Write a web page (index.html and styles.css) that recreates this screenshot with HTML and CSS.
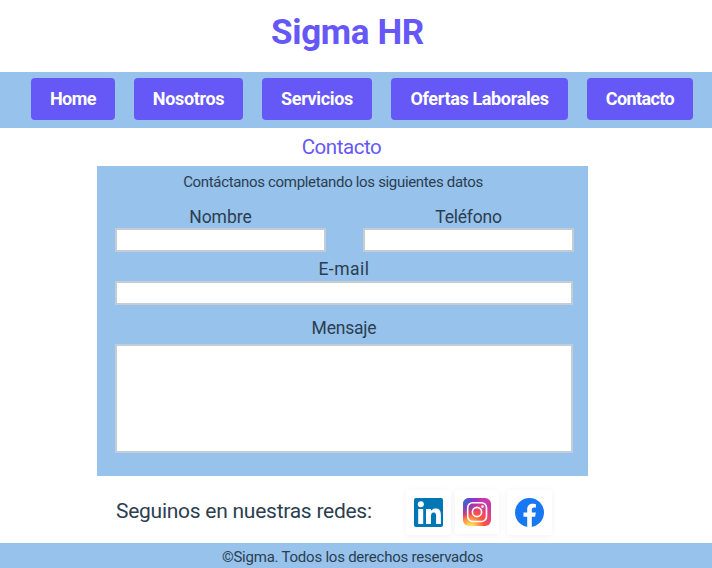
FILE: index.html
```html
<!DOCTYPE html>
<html lang="es">
<head>
<meta charset="utf-8">
<title>Sigma HR</title>
<link rel="stylesheet" href="styles.css">
</head>
<body>
<header class="header"><h1 class="brand">Sigma HR</h1></header>
<nav class="nav">
  <a class="nav-link home">Home</a>
  <a class="nav-link nosotros">Nosotros</a>
  <a class="nav-link servicios">Servicios</a>
  <a class="nav-link ofertas">Ofertas Laborales</a>
  <a class="nav-link contacto">Contacto</a>
</nav>
<main class="main">
  <h2 class="title">Contacto</h2>
  <form class="form">
    <p class="intro">Contáctanos completando los siguientes datos</p>
    <div class="row">
      <div class="field"><label class="label nombre" for="nombre">Nombre</label><input class="input" id="nombre" type="text"></div>
      <div class="field"><label class="label telefono" for="telefono">Teléfono</label><input class="input" id="telefono" type="tel"></div>
    </div>
    <div class="field wide"><label class="label email" for="email">E-mail</label><input class="input" id="email" type="email"></div>
    <div class="field wide message"><label class="label mensaje" for="mensaje">Mensaje</label><textarea class="input area" id="mensaje"></textarea></div>
  </form>
</main>
<section class="social">
  <p class="social-text">Seguinos en nuestras redes:</p>
  <a class="card linkedin">
    <svg width="29" height="29" viewBox="0 0 29 29"><rect width="29" height="29" rx="2" fill="#0077b5"/><circle cx="6.8" cy="6.2" r="3" fill="#fff"/><path fill="#fff" d="M4.2 11h5v15h-5zM12 11h4.9v2.1c.9-1.5 2.5-2.5 4.7-2.5 4.3 0 5.3 2.9 5.3 6.8V26h-4.8v-7.6c0-2-.3-3.8-2.5-3.8s-2.6 1.8-2.6 3.7V26h-5z"/></svg>
  </a>
  <a class="card instagram">
    <svg width="28" height="28" viewBox="0 0 28 28">
      <defs>
        <radialGradient id="warm" cx=".27" cy="1.07" r="1"><stop offset="0" stop-color="#fd5"/><stop offset=".12" stop-color="#fd5"/><stop offset=".5" stop-color="#ff543e"/><stop offset="1" stop-color="#c837ab"/></radialGradient>
        <radialGradient id="cool" cx="-.1" cy="0" r=".75"><stop offset="0" stop-color="#3771c8"/><stop offset=".3" stop-color="#3f66cf"/><stop offset="1" stop-color="#60f" stop-opacity="0"/></radialGradient>
      </defs>
      <rect width="28" height="28" rx="6" fill="url(#warm)"/><rect width="28" height="28" rx="6" fill="url(#cool)"/>
      <rect x="4.7" y="4.7" width="18.8" height="18.8" rx="5" fill="none" stroke="#fff" stroke-width="1.6"/><circle cx="14" cy="14" r="4.6" fill="none" stroke="#fff" stroke-width="1.6"/><circle cx="19.5" cy="8.6" r="1.3" fill="#fff"/>
    </svg>
  </a>
  <a class="card facebook">
    <svg width="29" height="29" viewBox="0 0 29 29"><circle cx="14.5" cy="14.5" r="14.5" fill="#1877f2"/><path fill="#fff" d="M12.2 29V18.7H8.5v-4.2h3.7v-3.2c0-3.6 2.2-5.6 5.5-5.6 1.6 0 3.2.3 3.2.3v3.5h-1.8c-1.8 0-2.3 1.1-2.3 2.3v2.7h4l-.7 4.2h-3.3V29z"/></svg>
  </a>
</section>
<footer class="footer">©Sigma. Todos los derechos reservados</footer>
</body>
</html>
```
FILE: styles.css
```css
* { box-sizing: border-box; }
body { margin: 0; background: #fff; color: #2c3e50; font-family: Roboto, "Liberation Sans", sans-serif; }
h1, h2, p { margin: 0; }
.header { height: 72px; padding: 12px 17px 0 0; text-align: center; }
.brand { font-size: 35px; line-height: 42px; font-weight: 700; letter-spacing: -.35px; color: #6658f6; }
.nav { display: flex; gap: 19px; height: 56px; padding: 6px 0 0 31px; background: #96c2eb; }
.nav-link { height: 42px; line-height: 42px; border-radius: 4px; background: #6658f6; color: #fff; font-size: 18px; font-weight: 700; letter-spacing: -.35px; text-align: center; white-space: nowrap; }
.home { width: 84px; letter-spacing: -.5px; }
.nosotros { width: 109px; }
.servicios { width: 110px; }
.ofertas { width: 177px; }
.contacto { width: 106px; letter-spacing: -.6px; }
.main { width: 491px; margin-left: 97px; }
.title { height: 38px; padding-right: 2px; line-height: 38px; font-size: 20.5px; font-weight: 400; letter-spacing: -.45px; text-align: center; color: #6658f6; }
.form { height: 310px; padding: 6px 14px 0 18px; background: #96c2eb; }
.intro { height: 20px; line-height: 20px; padding-right: 23px; font-size: 15px; letter-spacing: -.33px; text-align: center; white-space: nowrap; }
.row { display: flex; gap: 37px; margin-top: 15px; }
.field { width: 211px; }
.wide { width: 458px; margin-top: 7px; }
.message { margin-top: 13px; }
.label { display: block; height: 21px; line-height: 21px; font-size: 17.5px; text-align: center; }
.telefono, .mensaje { letter-spacing: -.2px; }
.email { letter-spacing: .5px; }
.wide .label { height: 22px; }
.message .label { height: 26px; }
.input { display: block; width: 100%; height: 24px; margin: 0; padding: 0 4px; border: 2px solid #c4cdd5; border-radius: 0; background: #fff; outline: 0; }
.area { height: 109px; resize: none; }
.social { display: flex; height: 67px; padding: 14px 0 0 116px; align-items: flex-start; }
.social-text { width: 290px; line-height: 42px; font-size: 21px; letter-spacing: -.26px; white-space: nowrap; }
.card { display: block; width: 45px; height: 45px; padding: 8px; border-radius: 2px; background: #fff; box-shadow: 0 1px 6px rgba(0,0,0,.06); }
.card svg { display: block; }
.instagram { width: 44px; height: 44px; margin: 0 8px 0 4px; }
.footer { height: 25px; padding-right: 7px; line-height: 28px; font-size: 15px; letter-spacing: -.23px; text-align: center; background: #96c2eb; }
```
